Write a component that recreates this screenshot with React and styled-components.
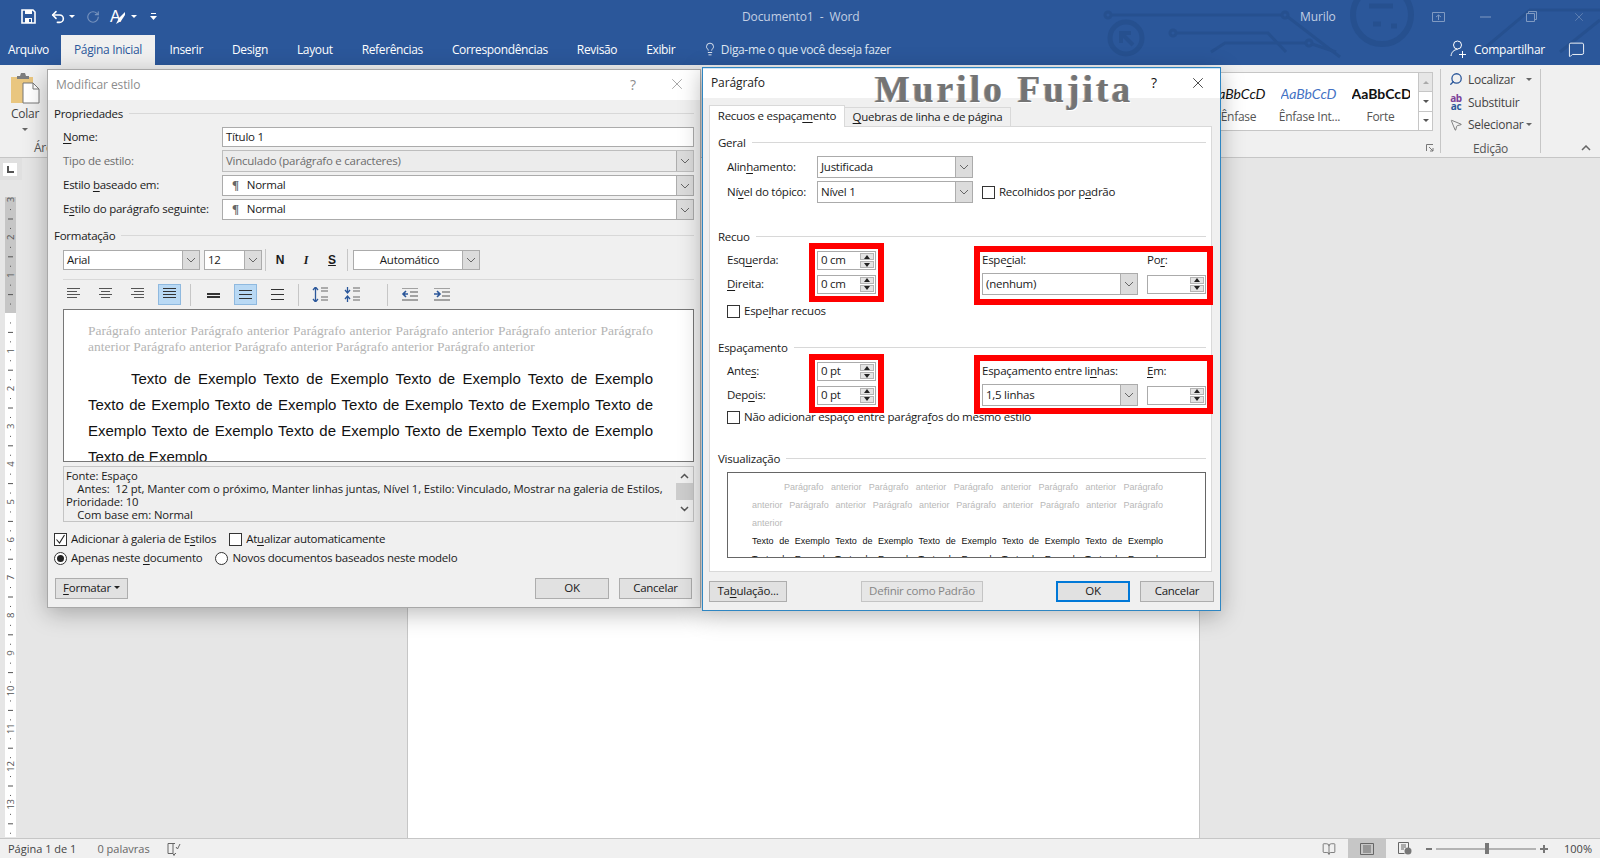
import React from "react";
import styled, { createGlobalStyle } from "styled-components";
import { Lightbulb, MessageSquare, Undo2, RotateCw, Search, MousePointer2, BookOpen, X } from "lucide-react";

const ui = `"Open Sans", "Noto Sans", "Liberation Sans", sans-serif`;

const GlobalStyle = createGlobalStyle`
  html, body { margin: 0; padding: 0; overflow: hidden; background: #e6e6e6; }
  * { box-sizing: border-box; }
  u { text-underline-offset: 2px; text-decoration-thickness: 1px; }
`;

const Screen = styled.div`
  position: relative;
  width: 1600px;
  height: 858px;
  display: flex;
  flex-direction: column;
  overflow: hidden;
  font-family: ${ui};
  font-size: 11.5px;
  color: #1a1a1a;
  letter-spacing: -0.25px;
`;

/* ---------- title bar and tabs ---------- */
const Header = styled.header`
  position: relative;
  height: 65px;
  flex: none;
  background: #2b579a;
  color: #fff;
`;
const Circuit = styled.svg`
  position: absolute;
  left: 0;
  top: 0;
  pointer-events: none;
`;
const TitleRow = styled.div`
  position: relative;
  height: 35px;
  display: flex;
  align-items: center;
  padding: 0 0 2px 21px;
`;
const Qat = styled.div`
  width: 721px;
  display: flex;
  align-items: center;
  flex: none;
`;
const QatSlot = styled.span`
  display: inline-flex;
  align-items: center;
  margin-right: ${({ $gap }) => $gap || 0}px;
  opacity: ${({ $dim }) => ($dim ? 0.35 : 1)};
`;
const QatLetter = styled.span`
  font-family: "Liberation Sans", sans-serif;
  font-size: 16px;
  line-height: 16px;
  margin-right: -5px;
`;
const MiniCaret = styled.span`
  width: 0;
  height: 0;
  border-left: 3px solid transparent;
  border-right: 3px solid transparent;
  border-top: 3px solid ${({ $color }) => $color || "#fff"};
`;
const DocTitle = styled.div`
  width: 558px;
  color: #c3cfe3;
  font-size: 12px;
  letter-spacing: -0.1px;
  white-space: pre;
`;
const UserName = styled.div`
  width: 132px;
  color: #c3cfe3;
  font-size: 12px;
  letter-spacing: -0.1px;
`;
const WinButtons = styled.div`
  display: flex;
  align-items: center;
  gap: 35px;
  opacity: 0.4;
`;
const TabRow = styled.nav`
  position: relative;
  height: 30px;
  display: flex;
  align-items: stretch;
`;
const RibbonTab = styled.div`
  display: flex;
  align-items: center;
  padding: 0 ${({ $pad }) => $pad || 14.5}px 2px;
  font-size: 12px;
  letter-spacing: -0.35px;
  color: ${({ $active }) => ($active ? "#2b579a" : "#fff")};
  background: ${({ $active }) => ($active ? "#f0f0f0" : "transparent")};
`;
const FileTab = styled(RibbonTab)`
  width: 61px;
  padding-left: 8px;
  padding-right: 0;
`;
const TellMe = styled.div`
  display: flex;
  align-items: center;
  gap: 4px;
  margin-left: 13px;
  padding-bottom: 2px;
  font-size: 12px;
  letter-spacing: -0.35px;
  color: #dfe6f1;
`;
const ShareArea = styled.div`
  margin-left: auto;
  display: flex;
  align-items: center;
  padding: 0 15px 2px 0;
  font-size: 12px;
`;
const ShareLabel = styled.span`
  margin: 0 23px 0 8px;
`;

/* ---------- ribbon ---------- */
const Ribbon = styled.section`
  height: 93px;
  flex: none;
  display: flex;
  background: #f0f0f0;
  border-bottom: 1px solid #c6c6c6;
  color: #444;
`;
const PasteGroup = styled.div`
  width: 50px;
  display: flex;
  flex-direction: column;
  align-items: center;
  padding-top: 8px;
  flex: none;
  svg { flex: none; }
`;
const PasteLabel = styled.div`
  margin-top: 2px;
  font-size: 12px;
  line-height: 16px;
`;
const PasteCaret = styled.div`
  margin-top: 6px;
  height: 3px;
  display: flex;
`;
const GroupName = styled.div`
  align-self: flex-start;
  margin: 9px 0 0 34px;
  font-size: 12px;
  line-height: 16px;
  white-space: nowrap;
  color: #555;
`;
const StylesGroup = styled.div`
  margin-left: auto;
  width: 300px;
  flex: none;
  display: flex;
  flex-direction: column;
  align-items: flex-end;
  padding: 7px 7px 0 0;
`;
const Gallery = styled.div`
  width: 293px;
  height: 59px;
  display: flex;
  justify-content: flex-end;
  background: #fff;
  border: 1px solid #c6c6c6;
`;
const StyleItem = styled.div`
  width: 71px;
  overflow: hidden;
  display: flex;
  flex-direction: column;
  align-items: center;
  padding-top: 11px;
`;
const StyleSample = styled.div`
  width: 58px;
  height: 20px;
  overflow: hidden;
  white-space: nowrap;
  font-family: "Lato", "Liberation Sans", sans-serif;
  font-size: 14px;
  letter-spacing: 0;
  line-height: 20px;
  font-style: ${({ $bold }) => ($bold ? "normal" : "italic")};
  font-weight: ${({ $bold }) => ($bold ? 700 : 400)};
  color: ${({ $color }) => $color || "#111"};
`;
const StyleLabel = styled.div`
  margin-top: 4px;
  font-size: 12px;
  color: #555;
  white-space: nowrap;
`;
const GalleryScroll = styled.div`
  width: 14px;
  margin-left: 2px;
  flex: none;
  display: flex;
  flex-direction: column;
  border-left: 1px solid #c6c6c6;
`;
const GalleryBtn = styled.div`
  flex: 1;
  display: flex;
  align-items: center;
  justify-content: center;
  background: ${({ $off }) => ($off ? "#e6e6e6" : "#fff")};
  & + & { border-top: 1px solid #c6c6c6; }
`;
const GalleryTri = styled.span`
  width: 0;
  height: 0;
  border-left: 3px solid transparent;
  border-right: 3px solid transparent;
  ${({ $up }) => ($up ? "border-bottom: 3px solid #aaa;" : "border-top: 3px solid #555;")}
`;
const Launcher = styled.svg`
  margin: 13px -1px 0 0;
`;
const GroupSep = styled.div`
  width: 1px;
  height: 84px;
  margin-top: 4px;
  background: #c6c6c6;
  flex: none;
`;
const EditGroup = styled.div`
  width: 99px;
  flex: none;
  display: flex;
  flex-direction: column;
  padding: 3px 0 0 8px;
`;
const EditRow = styled.div`
  height: 23px;
  display: flex;
  align-items: center;
  font-size: 12px;
  gap: 5px;
`;
const EditIcon = styled.span`
  width: 14px;
  display: inline-flex;
  justify-content: center;
`;
const FlippedSearch = styled(Search)`
  transform: scaleX(-1);
`;
const ReplaceIcon = styled.span`
  width: 14px;
  display: inline-flex;
  flex-direction: column;
  align-items: center;
  font-size: 10px;
  line-height: 8px;
  font-weight: 700;
  letter-spacing: -0.4px;
  color: #7b3f98;
`;
const ReplaceTo = styled.span`
  color: #2b579a;
`;
const EditCaret = styled.span`
  display: inline-flex;
  margin-left: ${({ $gap }) => $gap}px;
`;
const EditName = styled.div`
  margin-top: 4px;
  text-align: center;
  padding-right: 8px;
  font-size: 12px;
  color: #555;
`;
const CollapseArea = styled.div`
  width: 59px;
  flex: none;
  display: flex;
  align-items: flex-end;
  justify-content: flex-end;
  padding: 0 9px 6px 0;
`;

/* ---------- document area ---------- */
const Workspace = styled.main`
  flex: 1;
  display: flex;
  min-height: 0;
  background: #e6e6e6;
`;
const RulerColumn = styled.div`
  width: 407px;
  flex: none;
`;
const TabStop = styled.div`
  width: 22px;
  height: 22px;
  padding: 5px 5px 4px 3px;
  background: #e0e0e0;
`;
const TabStopBox = styled.div`
  width: 14px;
  height: 13px;
  background: #fff;
  display: flex;
  align-items: center;
  justify-content: center;
`;
const RulerSvg = styled.svg`
  display: block;
  margin: 17px 0 0 5px;
`;
const Page = styled.div`
  width: 793px;
  height: 100%;
  background: #fff;
  border-left: 1px solid #c6c6c6;
  border-right: 1px solid #c6c6c6;
`;
const StatusBar = styled.footer`
  height: 20px;
  flex: none;
  display: flex;
  align-items: stretch;
  background: #f0f0f0;
  border-top: 1px solid #c6c6c6;
  font-size: 11px;
  letter-spacing: 0;
  color: #444;
  padding-left: 8px;
`;
const StatusText = styled.div`
  display: flex;
  align-items: center;
  margin-right: ${({ $gap }) => $gap}px;
  color: ${({ $soft }) => ($soft ? "#666" : "#444")};
`;
const StatusIcon = styled.div`
  display: flex;
  align-items: center;
  justify-content: center;
  width: ${({ $w }) => $w || 38}px;
  background: ${({ $on }) => ($on ? "#c6c6c6" : "transparent")};
`;
const ZoomBox = styled.div`
  margin-left: auto;
  display: flex;
  align-items: stretch;
  padding-right: 8px;
`;
const ZoomLabel = styled.div`
  display: flex;
  align-items: center;
  margin-left: 12px;
`;

/* ---------- shared dialog parts ---------- */
const Dialog = styled.div`
  position: absolute;
  left: ${({ $left }) => $left}px;
  top: ${({ $top }) => $top}px;
  width: ${({ $width }) => $width}px;
  height: ${({ $height }) => $height}px;
  background: #f0f0f0;
  border: 1px solid ${({ $active }) => ($active ? "#2f86c2" : "#a8a8a8")};
  box-shadow: 0 5px 22px rgba(0, 0, 0, 0.28);
  display: flex;
  flex-direction: column;
`;
const DialogTitle = styled.div`
  height: 30px;
  flex: none;
  display: flex;
  align-items: center;
  padding: 0 0 2px ${({ $pad }) => $pad}px;
  background: #fff;
  font-size: 12px;
  letter-spacing: -0.1px;
  color: ${({ $dim }) => ($dim ? "#8c8c8c" : "#222")};
  border-top: ${({ $active }) => ($active ? "1px solid #cfe4f5" : "0")};
`;
const TitleGlyphs = styled.div`
  margin-left: auto;
  display: flex;
  align-items: center;
  gap: 32px;
  padding-right: ${({ $right }) => $right}px;
  color: ${({ $dim }) => ($dim ? "#8c8c8c" : "#111")};
  font-size: 14px;
`;
const DialogBody = styled.div`
  flex: 1;
  padding: 0 ${({ $right }) => $right}px 0 6px;
  display: flex;
  flex-direction: column;
`;
const Head = styled.div`
  height: 14px;
  flex: none;
  margin-top: ${({ $top }) => $top}px;
  padding-bottom: 2px;
  display: flex;
  align-items: center;
  gap: 6px;
  white-space: nowrap;
  &::after {
    content: "";
    flex: 1;
    height: 1px;
    background: #d8d8d8;
  }
`;
const Box = styled.div`
  display: flex;
  align-items: center;
  width: ${({ $w }) => ($w ? `${$w}px` : "auto")};
  flex: ${({ $w }) => ($w ? "none" : 1)};
  height: ${({ $h }) => $h || 22}px;
  padding-left: ${({ $pad }) => ($pad === undefined ? 3 : $pad)}px;
  background: ${({ $off }) => ($off ? "#ececec" : "#fff")};
  color: ${({ $off }) => ($off ? "#6d6d6d" : "#1a1a1a")};
  border: 1px solid ${({ $off }) => ($off ? "#bdbdbd" : "#ababab")};
  white-space: nowrap;
`;
const BoxText = styled.span`
  flex: 1;
  min-width: 0;
  padding-bottom: 2px;
  text-align: ${({ $center }) => ($center ? "center" : "left")};
`;
const Pilcrow = styled.span`
  margin: 0 8px 2px 9px;
  font-family: "Liberation Serif", serif;
  font-size: 13px;
  font-weight: 700;
  color: #666;
`;
const ArrowBtn = styled.div`
  width: 17px;
  align-self: stretch;
  flex: none;
  display: flex;
  align-items: center;
  justify-content: center;
  background: #dcdcdc;
  border-left: 1px solid #adadad;
`;
const SpinCol = styled.div`
  width: 16px;
  height: 100%;
  padding: 1px;
  flex: none;
  display: flex;
  flex-direction: column;
  gap: 1px;
`;
const SpinBtn = styled.div`
  flex: 1;
  display: flex;
  align-items: center;
  justify-content: center;
  background: #e4e4e4;
  border: 1px solid #b5b5b5;
`;
const SpinTri = styled.span`
  width: 0;
  height: 0;
  border-left: 3px solid transparent;
  border-right: 3px solid transparent;
  ${({ $up }) => ($up ? "border-bottom: 4px solid #222;" : "border-top: 4px solid #222;")}
`;
const CheckRow = styled.div`
  height: 14px;
  flex: none;
  display: flex;
  align-items: center;
  margin-top: ${({ $top }) => $top}px;
  margin-left: ${({ $left }) => $left || 0}px;
`;
const CheckItem = styled.label`
  display: flex;
  align-items: center;
  gap: 4px;
  white-space: nowrap;
  margin-right: ${({ $gap }) => $gap || 0}px;
`;
const CheckText = styled.span`
  padding-bottom: 2px;
`;
const CheckBoxMark = styled.span`
  width: 13px;
  height: 13px;
  flex: none;
  display: inline-flex;
  align-items: center;
  justify-content: center;
  background: #fff;
  border: 1px solid #333;
  border-radius: ${({ $round }) => ($round ? "50%" : "0")};
`;
const RadioDot = styled.span`
  width: 7px;
  height: 7px;
  border-radius: 50%;
  background: #222;
`;
const Btn = styled.div`
  height: 21px;
  width: ${({ $w }) => $w}px;
  flex: none;
  display: flex;
  align-items: center;
  justify-content: center;
  gap: 3px;
  padding-bottom: 2px;
  margin-left: ${({ $left }) => $left || 0}px;
  background: ${({ $off }) => ($off ? "#e6e6e6" : "#e1e1e1")};
  color: ${({ $off }) => ($off ? "#858585" : "#1a1a1a")};
  border: ${({ $main }) => ($main ? "2px solid #0078d7" : "1px solid #adadad")};
  ${({ $off }) => $off && "border-color: #c4c4c4;"}
`;

/* ---------- style dialog ---------- */
const FieldRow = styled.div`
  display: flex;
  align-items: center;
  margin-top: ${({ $top }) => $top}px;
  padding-left: 9px;
`;
const FieldLabel = styled.div`
  width: ${({ $w }) => $w || 159}px;
  flex: none;
  padding-bottom: 2px;
  white-space: nowrap;
  color: ${({ $off }) => ($off ? "#6d6d6d" : "inherit")};
`;
const FontBar = styled.div`
  height: 20px;
  flex: none;
  margin-top: 7px;
  padding-left: 9px;
  display: flex;
  align-items: center;
`;
const BarGap = styled.div`
  width: 4px;
  flex: none;
`;
const BarSep = styled.div`
  width: 1px;
  height: ${({ $h }) => $h || 22}px;
  flex: none;
  background: #c6c6c6;
  margin: 0 ${({ $right }) => $right || 0}px 0 ${({ $left }) => $left || 0}px;
`;
const FontGlyph = styled.div`
  width: 26px;
  flex: none;
  text-align: center;
  font-size: 12px;
  font-weight: 700;
  font-style: ${({ $italic }) => ($italic ? "italic" : "normal")};
  text-decoration: ${({ $under }) => ($under ? "underline" : "none")};
  font-family: ${({ $italic }) => ($italic ? `"Liberation Serif", serif` : `"Liberation Sans", sans-serif`)};
`;
const BarRule = styled.div`
  height: 1px;
  flex: none;
  margin: 9px 0 0 9px;
  background: #d8d8d8;
`;
const ParaBar = styled.div`
  height: 21px;
  flex: none;
  margin-top: 4px;
  padding-left: 8px;
  display: flex;
  align-items: center;
  gap: 9px;
`;
const ParaBtn = styled.div`
  width: 23px;
  height: 21px;
  flex: none;
  display: flex;
  align-items: center;
  justify-content: center;
  background: ${({ $on }) => ($on ? "#b9d9f4" : "transparent")};
  border: 1px solid ${({ $on }) => ($on ? "#8fb9df" : "transparent")};
`;
const SamplePane = styled.div`
  height: 153px;
  flex: none;
  margin: 4px 0 0 9px;
  padding: 13px 40px 0 24px;
  background: #fff;
  border: 1px solid #777;
  overflow: hidden;
`;
const PrevLine = styled.div`
  font-family: "Liberation Serif", serif;
  font-size: 13.5px;
  line-height: 16px;
  letter-spacing: 0;
  color: #b4b4b4;
  white-space: nowrap;
  text-align: ${({ $fill }) => ($fill ? "justify" : "left")};
  text-align-last: ${({ $fill }) => ($fill ? "justify" : "left")};
`;
const SampleText = styled.div`
  margin-top: 11px;
  color: #111;
  letter-spacing: 0;
`;
const SampleLine = styled.div`
  font-family: "Liberation Sans", sans-serif;
  font-size: 15px;
  line-height: 26px;
  white-space: nowrap;
  padding-left: ${({ $indent }) => ($indent ? 43 : 0)}px;
  text-align: ${({ $fill }) => ($fill ? "justify" : "left")};
  text-align-last: ${({ $fill }) => ($fill ? "justify" : "left")};
`;
const DescBox = styled.div`
  height: 56px;
  flex: none;
  margin: 4px 0 0 9px;
  display: flex;
  background: #efefef;
  border: 1px solid #c4c4c4;
`;
const DescText = styled.div`
  flex: 1;
  padding: 2px 0 0 2px;
  overflow: hidden;
  font-size: 11.3px;
  letter-spacing: -0.1px;
  line-height: 13px;
  white-space: pre;
`;
const ScrollTrack = styled.div`
  width: 17px;
  flex: none;
  display: flex;
  flex-direction: column;
  align-items: center;
  padding-top: 6px;
  background: #f0f0f0;
  svg { flex: none; }
`;
const ScrollThumb = styled.div`
  width: 17px;
  height: 17px;
  margin: 4px 0 6px;
  background: #cdcdcd;
`;
const BottomRow = styled.div`
  flex: none;
  display: flex;
  align-items: center;
  margin-top: 13px;
  padding: 0 2px 0 1px;
`;

/* ---------- paragraph dialog ---------- */
const TabStrip = styled.div`
  height: 21px;
  flex: none;
  margin-top: 7px;
  display: flex;
  align-items: flex-start;
`;
const SheetTab = styled.div`
  height: ${({ $active }) => ($active ? 22 : 20)}px;
  width: ${({ $w }) => $w}px;
  margin-top: ${({ $active }) => ($active ? 0 : 2)}px;
  flex: none;
  display: flex;
  align-items: center;
  justify-content: center;
  padding-bottom: 2px;
  position: relative;
  z-index: ${({ $active }) => ($active ? 1 : 0)};
  background: ${({ $active }) => ($active ? "#fff" : "#f0f0f0")};
  border: 1px solid #d9d9d9;
  border-bottom: 0;
  border-left: ${({ $active }) => ($active ? "1px solid #d9d9d9" : "0")};
  white-space: nowrap;
`;
const Panel = styled.div`
  position: relative;
  height: 446px;
  flex: none;
  padding: 0 5px 0 8px;
  background: #fff;
  border: 1px solid #d9d9d9;
  display: flex;
  flex-direction: column;
`;
const GeneralRow = styled.div`
  display: flex;
  align-items: center;
  margin-top: ${({ $top }) => $top}px;
  padding-left: 9px;
`;
const MetricGrid = styled.div`
  display: grid;
  grid-template-columns: 90px 165px 165px 59px;
  align-items: center;
  margin-top: ${({ $top }) => $top}px;
  padding-left: 9px;
  white-space: nowrap;
`;
const MetricLabel = styled.span`
  padding-bottom: 2px;
`;
const PaneBox = styled.div`
  height: 86px;
  flex: none;
  margin: 6px 0 0 9px;
  padding: 5px 42px 0 24px;
  border: 1px solid #666;
  overflow: hidden;
`;
const MiniLine = styled.div`
  font-family: "Liberation Sans", sans-serif;
  font-size: 9px;
  line-height: 18px;
  letter-spacing: 0;
  white-space: nowrap;
  color: ${({ $dark }) => ($dark ? "#111" : "#b8b8b8")};
  padding-left: ${({ $indent }) => ($indent ? 32 : 0)}px;
  text-align: ${({ $fill }) => ($fill ? "justify" : "left")};
  text-align-last: ${({ $fill }) => ($fill ? "justify" : "left")};
`;
const ButtonBar = styled.div`
  flex: none;
  display: flex;
  margin-top: 9px;
`;
const Highlight = styled.div`
  position: absolute;
  left: ${({ $left }) => $left}px;
  top: ${({ $top }) => $top}px;
  width: ${({ $w }) => $w}px;
  height: 59px;
  border: 6px solid #ff0000;
  pointer-events: none;
`;
const Watermark = styled.div`
  position: absolute;
  left: 172px;
  top: 0;
  font-family: "Liberation Serif", serif;
  font-size: 37px;
  font-weight: 700;
  line-height: 44px;
  letter-spacing: 3.2px;
  color: #747474;
  white-space: nowrap;
  text-shadow: 1px 1px 0 #fff, -1px 0 0 #999;
`;

const Chevron = ({ color = "#666" }) => (
  <svg width="10" height="6" viewBox="0 0 10 6">
    <path d="M1 1l4 4 4-4" fill="none" stroke={color} />
  </svg>
);

const Select = ({ w, h, off, center, para, children }) => (
  <Box $w={w} $h={h} $off={off} $pad={para ? 0 : 3}>
    {para && <Pilcrow>¶</Pilcrow>}
    <BoxText $center={center}>{children}</BoxText>
    <ArrowBtn><Chevron /></ArrowBtn>
  </Box>
);

const Spinner = ({ children }) => (
  <Box $w={59} $h={19}>
    <BoxText>{children}</BoxText>
    <SpinCol>
      <SpinBtn><SpinTri $up /></SpinBtn>
      <SpinBtn><SpinTri /></SpinBtn>
    </SpinCol>
  </Box>
);

const Check = ({ on, gap, children }) => (
  <CheckItem $gap={gap}>
    <CheckBoxMark>
      {on && (
        <svg width="11" height="11" viewBox="0 0 11 11">
          <path d="M1.5 5.5l3 3.5 5-8" fill="none" stroke="#222" strokeWidth="1.1" />
        </svg>
      )}
    </CheckBoxMark>
    <CheckText>{children}</CheckText>
  </CheckItem>
);

const Radio = ({ on, gap, children }) => (
  <CheckItem $gap={gap}>
    <CheckBoxMark $round>{on && <RadioDot />}</CheckBoxMark>
    <CheckText>{children}</CheckText>
  </CheckItem>
);

// horizontal text-alignment glyphs, each row is [from, to]
const LinesIcon = ({ rows, step = 3, color = "#555" }) => (
  <svg width="15" height="13" viewBox="0 0 15 13">
    {rows.map(([a, b], i) => (
      <rect key={i} x={a} y={i * step} width={b - a} height="1" fill={color} />
    ))}
  </svg>
);

const SpacingIcon = ({ ys, thick }) => (
  <svg width="15" height="13" viewBox="0 0 15 13">
    {ys.map((y) => (
      <rect key={y} x="1" y={y} width="13" height={thick ? 2 : 1} fill="#333" />
    ))}
  </svg>
);

const ParaSpaceIcon = ({ flip }) => (
  <svg width="16" height="15" viewBox="0 0 16 15">
    <path
      d={flip ? "M3.5 0v5M1 3l2.5 3L6 3M3.5 15v-5M1 12l2.5-3L6 12" : "M3.5 0v15M1 3l2.5-3L6 3M1 12l2.5 3L6 12"}
      fill="none"
      stroke="#2b579a"
      strokeWidth="1.3"
    />
    <path d="M9 1h7M9 4h7M9 10h7M9 13h7" stroke="#666" />
  </svg>
);

const IndentIcon = ({ flip }) => (
  <svg width="17" height="13" viewBox="0 0 17 13">
    <path d="M1 0h16M9 4h8M9 8h8M1 12h16" stroke="#555" />
    <path d={flip ? "M1 6h5M4 3l3 3-3 3" : "M7 6H2M5 3L2 6l3 3"} fill="none" stroke="#2b579a" strokeWidth="1.6" />
  </svg>
);

const Ruler = () => {
  const zero = 116;
  const cm = 37.8;
  const marks = [];
  for (let n = -3; n <= 14; n++) {
    const y = zero + n * cm;
    if (n !== 0) {
      marks.push(
        <text key={`n${n}`} x="0" y="0" fontSize="9.5" fontFamily="Open Sans" textAnchor="middle" fill="#555"
          transform={`translate(9 ${y}) rotate(-90)`}>
          {Math.abs(n)}
        </text>
      );
    }
    [0.25, 0.5, 0.75].forEach((f) => {
      const w = f === 0.5 ? 5 : 1;
      marks.push(<rect key={`${n}-${f}`} x={(11 - w) / 2} y={y + f * cm} width={w} height="1" fill="#555" />);
    });
  }
  return (
    <RulerSvg width="11" height="640" viewBox="0 0 11 640">
      <rect width="11" height="116" fill="#c6c6c6" />
      <rect y="116" width="11" height="524" fill="#fff" />
      {marks}
    </RulerSvg>
  );
};

const tabs = ["Inserir", "Design", "Layout", "Referências", "Correspondências", "Revisão", "Exibir"];
const para5 = "Parágrafo anterior Parágrafo anterior Parágrafo anterior Parágrafo anterior Parágrafo anterior Parágrafo";

const App = () => (
  <Screen>
    <GlobalStyle />
    <Header>
      <Circuit width="1600" height="65" viewBox="0 0 1600 65" fill="none" stroke="#26508f" strokeWidth="3">
        <circle cx="1108" cy="15" r="3" />
        <path d="M1111 15h171" />
        <circle cx="1285" cy="15" r="3" />
        <path d="M1288 17l52 40" />
        <circle cx="1126" cy="38" r="16" strokeWidth="5" />
        <path d="M1133 45l-12-12M1121 43V33h10" strokeWidth="4" />
        <circle cx="1173" cy="33" r="3" />
        <path d="M1176 33h92l18 19" />
        <path d="M1211 52l14-9h81" />
        <circle cx="1309" cy="43" r="3" />
        <path d="M1312 44l24 8" />
        <circle cx="1382" cy="15" r="29" strokeWidth="6" />
        <path d="M1369 6h24M1373 24h8M1391 26h6" strokeWidth="5" />
        <path d="M1480 52l50-42h70M1560 52l40-32" />
      </Circuit>
      <TitleRow>
        <Qat>
          <QatSlot $gap={14}>
            <svg width="15" height="15" viewBox="0 0 15 15">
              <path d="M1 1h11l2 2v11H1z" fill="none" stroke="#fff" strokeWidth="1.6" />
              <path d="M4 1h7v4H4zM4 9h7v5H4z" fill="#fff" />
              <path d="M8 10h2v3H8z" fill="#2b579a" />
            </svg>
          </QatSlot>
          <QatSlot $gap={3}><Undo2 size={16} color="#fff" strokeWidth={2.4} /></QatSlot>
          <QatSlot $gap={11}><MiniCaret /></QatSlot>
          <QatSlot $gap={10} $dim><RotateCw size={14} color="#fff" strokeWidth={2} /></QatSlot>
          <QatSlot $gap={5}>
            <QatLetter>A</QatLetter>
            <svg width="11" height="16" viewBox="0 0 11 16">
              <path d="M10 3L4 9l-3 6 5-3 4-6z" fill="#fff" />
            </svg>
          </QatSlot>
          <QatSlot $gap={13}><MiniCaret /></QatSlot>
          <QatSlot>
            <svg width="7" height="7" viewBox="0 0 7 7">
              <path d="M1 0h5v1H1z" fill="#fff" />
              <path d="M0 3h7L3.500 7z" fill="#fff" />
            </svg>
          </QatSlot>
        </Qat>
        <DocTitle>Documento1  -  Word</DocTitle>
        <UserName>Murilo</UserName>
        <WinButtons>
          <svg width="13" height="10" viewBox="0 0 13 10" fill="none" stroke="#fff">
            <path d="M.5.5h12v9H.5zM4 5l2.500-2L9 5M6.500 3v5" />
          </svg>
          <svg width="11" height="2" viewBox="0 0 11 2"><path d="M0 1h11" stroke="#fff" /></svg>
          <svg width="11" height="11" viewBox="0 0 11 11" fill="none" stroke="#fff">
            <path d="M.5 2.500h8v8h-8zM2.500 2.500v-2h8v8h-2" />
          </svg>
          <X size={14} color="#fff" strokeWidth={1} />
        </WinButtons>
      </TitleRow>
      <TabRow>
        <FileTab>Arquivo</FileTab>
        <RibbonTab $active $pad={13}>Página Inicial</RibbonTab>
        {tabs.map((t) => <RibbonTab key={t}>{t}</RibbonTab>)}
        <TellMe>
          <Lightbulb size={14} color="#fff" strokeWidth={1.4} />
          Diga-me o que você deseja fazer
        </TellMe>
        <ShareArea>
          <svg width="16" height="18" viewBox="0 0 16 18" fill="none" stroke="#fff">
            <circle cx="7.500" cy="5" r="4" />
            <path d="M1 16c.5-4 3-6.500 6.500-6.500M9 14.500h7M12.500 11v7" />
          </svg>
          <ShareLabel>Compartilhar</ShareLabel>
          <MessageSquare size={17} color="#fff" strokeWidth={1.3} />
        </ShareArea>
      </TabRow>
    </Header>

    <Ribbon>
      <PasteGroup>
        <svg width="30" height="31" viewBox="0 0 30 31">
          <rect x="1" y="4" width="22" height="26" fill="#e9c67f" />
          <path d="M7 5V3h3l1-3h4l1 3h3v3H7z" fill="#7d7d7d" />
          <path d="M13 10h10l6 6v14H13z" fill="#fff" stroke="#777" />
          <path d="M23 10v6h6" fill="none" stroke="#777" />
        </svg>
        <PasteLabel>Colar</PasteLabel>
        <PasteCaret><MiniCaret $color="#666" /></PasteCaret>
        <GroupName>Área de Transferência</GroupName>
      </PasteGroup>
      <StylesGroup>
        <Gallery>
          <StyleItem>
            <StyleSample>AaBbCcD</StyleSample>
            <StyleLabel>Ênfase</StyleLabel>
          </StyleItem>
          <StyleItem>
            <StyleSample $color="#4472c4">AaBbCcD</StyleSample>
            <StyleLabel>Ênfase Int...</StyleLabel>
          </StyleItem>
          <StyleItem>
            <StyleSample $bold>AaBbCcD</StyleSample>
            <StyleLabel>Forte</StyleLabel>
          </StyleItem>
          <GalleryScroll>
            <GalleryBtn $off><GalleryTri $up /></GalleryBtn>
            <GalleryBtn><GalleryTri /></GalleryBtn>
            <GalleryBtn><GalleryTri /></GalleryBtn>
          </GalleryScroll>
        </Gallery>
        <Launcher width="8" height="8" viewBox="0 0 8 8" fill="none" stroke="#777">
          <path d="M.5 7V.5H7M3 3l4 4M7 4v3H4" />
        </Launcher>
      </StylesGroup>
      <GroupSep />
      <EditGroup>
        <EditRow>
          <EditIcon><FlippedSearch size={14} color="#2b579a" strokeWidth={2.2} /></EditIcon>
          Localizar
          <EditCaret $gap={6}><MiniCaret $color="#666" /></EditCaret>
        </EditRow>
        <EditRow>
          <ReplaceIcon><span>ab</span><ReplaceTo>ac</ReplaceTo></ReplaceIcon>
          Substituir
        </EditRow>
        <EditRow>
          <EditIcon><MousePointer2 size={14} color="#555" strokeWidth={1.2} /></EditIcon>
          Selecionar
          <EditCaret $gap={-3}><MiniCaret $color="#666" /></EditCaret>
        </EditRow>
        <EditName>Edição</EditName>
      </EditGroup>
      <GroupSep />
      <CollapseArea>
        <svg width="10" height="6" viewBox="0 0 10 6">
          <path d="M1 5l4-4 4 4" fill="none" stroke="#666" strokeWidth="1.5" />
        </svg>
      </CollapseArea>
    </Ribbon>

    <Workspace>
      <RulerColumn>
        <TabStop>
          <TabStopBox>
            <svg width="7" height="7" viewBox="0 0 7 7"><path d="M0 0h2v5h5v2H0z" fill="#555" /></svg>
          </TabStopBox>
        </TabStop>
        <Ruler />
      </RulerColumn>
      <Page />
    </Workspace>

    <StatusBar>
      <StatusText $gap={21}>Página 1 de 1</StatusText>
      <StatusText $gap={17} $soft>0 palavras</StatusText>
      <StatusIcon $w={14}>
        <svg width="14" height="14" viewBox="0 0 14 14" fill="none" stroke="#666">
          <path d="M1 1.500h5v10H1zM6 11.500l1 2 1-2h1M6 1.500h2M9 5l1.500 2L13 2" />
        </svg>
      </StatusIcon>
      <ZoomBox>
        <StatusIcon $w={38}><BookOpen size={14} color="#666" strokeWidth={1.4} /></StatusIcon>
        <StatusIcon $on $w={38}>
          <svg width="14" height="12" viewBox="0 0 14 12" fill="none" stroke="#666">
            <path d="M.5.500h13v11H.5zM3 3h8M3 5h8M3 7h8M3 9h8" />
          </svg>
        </StatusIcon>
        <StatusIcon $w={38}>
          <svg width="14" height="13" viewBox="0 0 14 13" fill="none" stroke="#666">
            <path d="M.5.500h10v6M.5.500v11h6M3 3h5M3 5h5M3 7h3" />
            <circle cx="10" cy="9" r="3.500" fill="#777" stroke="none" />
          </svg>
        </StatusIcon>
        <StatusIcon $w={128}>
          <svg width="124" height="13" viewBox="0 0 124 13">
            <path d="M0 6h6v2H0zM10 6.500h100v1H10zM59 1h4v11h-4zM114 6h8v2h-8zM117 3h2v8h-2z" fill="#777" />
          </svg>
        </StatusIcon>
        <ZoomLabel>100%</ZoomLabel>
      </ZoomBox>
    </StatusBar>

    <Dialog $left={47} $top={69} $width={654} $height={539}>
      <DialogTitle $dim $pad={8}>
        Modificar estilo
        <TitleGlyphs $dim $right={14}>
          <span>?</span>
          <X size={18} strokeWidth={1} />
        </TitleGlyphs>
      </DialogTitle>
      <DialogBody $right={6}>
        <Head $top={7}>Propriedades</Head>
        <FieldRow $top={6}>
          <FieldLabel><u>N</u>ome:</FieldLabel>
          <Box $h={20}><BoxText>Título 1</BoxText></Box>
        </FieldRow>
        <FieldRow $top={3}>
          <FieldLabel $off>Tipo de estilo:</FieldLabel>
          <Select off>Vinculado (parágrafo e caracteres)</Select>
        </FieldRow>
        <FieldRow $top={3}>
          <FieldLabel>Estilo <u>b</u>aseado em:</FieldLabel>
          <Select h={21} para>Normal</Select>
        </FieldRow>
        <FieldRow $top={3}>
          <FieldLabel>E<u>s</u>tilo do parágrafo seguinte:</FieldLabel>
          <Select h={21} para>Normal</Select>
        </FieldRow>
        <Head $top={9}>Formatação</Head>
        <FontBar>
          <Select w={137} h={20}>Arial</Select>
          <BarGap />
          <Select w={58} h={20}>12</Select>
          <BarSep $left={3} $right={1} />
          <FontGlyph>N</FontGlyph>
          <FontGlyph $italic>I</FontGlyph>
          <FontGlyph $under>S</FontGlyph>
          <BarSep $left={2} $right={5} />
          <Select w={127} h={20} center>Automático</Select>
        </FontBar>
        <BarRule />
        <ParaBar>
          <ParaBtn><LinesIcon rows={[[1, 14], [1, 11], [1, 14], [1, 11]]} /></ParaBtn>
          <ParaBtn><LinesIcon rows={[[1, 14], [3, 12], [1, 14], [3, 12]]} /></ParaBtn>
          <ParaBtn><LinesIcon rows={[[1, 14], [4, 14], [1, 14], [4, 14]]} /></ParaBtn>
          <ParaBtn $on><LinesIcon color="#333" rows={[[1, 14], [1, 14], [1, 14], [1, 14]]} /></ParaBtn>
          <BarSep $right={2} />
          <ParaBtn><SpacingIcon ys={[5, 8]} thick /></ParaBtn>
          <ParaBtn $on><SpacingIcon ys={[2, 6, 10]} /></ParaBtn>
          <ParaBtn><SpacingIcon ys={[1, 6, 11]} /></ParaBtn>
          <BarSep />
          <ParaBtn><ParaSpaceIcon /></ParaBtn>
          <ParaBtn><ParaSpaceIcon flip /></ParaBtn>
          <BarSep $left={15} $right={1} />
          <ParaBtn><IndentIcon /></ParaBtn>
          <ParaBtn><IndentIcon flip /></ParaBtn>
        </ParaBar>
        <SamplePane>
          <PrevLine $fill>{para5}</PrevLine>
          <PrevLine>anterior Parágrafo anterior Parágrafo anterior Parágrafo anterior Parágrafo anterior</PrevLine>
          <SampleText>
            <SampleLine $fill $indent>Texto de Exemplo Texto de Exemplo Texto de Exemplo Texto de Exemplo</SampleLine>
            <SampleLine $fill>Texto de Exemplo Texto de Exemplo Texto de Exemplo Texto de Exemplo Texto de</SampleLine>
            <SampleLine $fill>Exemplo Texto de Exemplo Texto de Exemplo Texto de Exemplo Texto de Exemplo</SampleLine>
            <SampleLine>Texto de Exemplo</SampleLine>
          </SampleText>
        </SamplePane>
        <DescBox>
          <DescText>
            {"Fonte: Espaço\n    Antes:  12 pt, Manter com o próximo, Manter linhas juntas, Nível 1, Estilo: Vinculado, Mostrar na galeria de Estilos,\nPrioridade: 10\n    Com base em: Normal"}
          </DescText>
          <ScrollTrack>
            <svg width="9" height="6" viewBox="0 0 9 6"><path d="M1 5l3.500-3.500L8 5" fill="none" stroke="#555" strokeWidth="1.5" /></svg>
            <ScrollThumb />
            <svg width="9" height="6" viewBox="0 0 9 6"><path d="M1 1l3.500 3.500L8 1" fill="none" stroke="#555" strokeWidth="1.5" /></svg>
          </ScrollTrack>
        </DescBox>
        <CheckRow $top={10}>
          <Check on gap={13}>Adicionar à galeria de E<u>s</u>tilos</Check>
          <Check>At<u>u</u>alizar automaticamente</Check>
        </CheckRow>
        <CheckRow $top={5}>
          <Radio on gap={13}>Apenas neste <u>d</u>ocumento</Radio>
          <Radio>Novos documentos baseados neste modelo</Radio>
        </CheckRow>
        <BottomRow>
          <Btn $w={73}><span><u>F</u>ormatar</span><MiniCaret $color="#222" /></Btn>
          <Btn $w={74} $left={407}>OK</Btn>
          <Btn $w={73} $left={10}>Cancelar</Btn>
        </BottomRow>
      </DialogBody>
    </Dialog>

    <Dialog $active $left={702} $top={67} $width={519} $height={544}>
      <DialogTitle $active $pad={8}>
        Parágrafo
        <TitleGlyphs $right={13}>
          <span>?</span>
          <X size={18} strokeWidth={1} />
        </TitleGlyphs>
      </DialogTitle>
      <Watermark>Murilo Fujita</Watermark>
      <DialogBody $right={8}>
        <TabStrip>
          <SheetTab $active $w={136}><span>Recuos e espaça<u>m</u>ento</span></SheetTab>
          <SheetTab $w={166}><span><u>Q</u>uebras de linha e de página</span></SheetTab>
        </TabStrip>
        <Panel>
          <Head $top={9}>Geral</Head>
          <GeneralRow $top={6}>
            <FieldLabel $w={90}>Alin<u>h</u>amento:</FieldLabel>
            <Select w={156}>Justificada</Select>
          </GeneralRow>
          <GeneralRow $top={3}>
            <FieldLabel $w={90}>Ní<u>v</u>el do tópico:</FieldLabel>
            <Select w={156}>Nível 1</Select>
            <CheckRow $left={9} $top={0}>
              <Check>Recolhidos por p<u>a</u>drão</Check>
            </CheckRow>
          </GeneralRow>

          <Head $top={27}>Recuo</Head>
          <MetricGrid $top={7}>
            <MetricLabel>Esq<u>u</u>erda:</MetricLabel>
            <Spinner>0 cm</Spinner>
            <MetricLabel>Espe<u>c</u>ial:</MetricLabel>
            <MetricLabel>Po<u>r</u>:</MetricLabel>
          </MetricGrid>
          <MetricGrid $top={3}>
            <MetricLabel><u>D</u>ireita:</MetricLabel>
            <Spinner>0 cm</Spinner>
            <Select w={156}>(nenhum)</Select>
            <Spinner />
          </MetricGrid>
          <CheckRow $top={9} $left={9}>
            <Check>Espe<u>l</u>har recuos</Check>
          </CheckRow>

          <Head $top={23}>Espaçamento</Head>
          <MetricGrid $top={7}>
            <MetricLabel>Ante<u>s</u>:</MetricLabel>
            <Spinner>0 pt</Spinner>
            <MetricLabel>Espaçamento entre li<u>n</u>has:</MetricLabel>
            <MetricLabel><u>E</u>m:</MetricLabel>
          </MetricGrid>
          <MetricGrid $top={3}>
            <MetricLabel>Dep<u>o</u>is:</MetricLabel>
            <Spinner>0 pt</Spinner>
            <Select w={156}>1,5 linhas</Select>
            <Spinner />
          </MetricGrid>
          <CheckRow $top={4} $left={9}>
            <Check>Não adicionar espaço entre parágra<u>f</u>os do mesmo estilo</Check>
          </CheckRow>

          <Head $top={28}>Visualização</Head>
          <PaneBox>
            <MiniLine $fill $indent>Parágrafo anterior Parágrafo anterior Parágrafo anterior Parágrafo anterior Parágrafo</MiniLine>
            <MiniLine $fill>anterior Parágrafo anterior Parágrafo anterior Parágrafo anterior Parágrafo anterior Parágrafo</MiniLine>
            <MiniLine>anterior</MiniLine>
            <MiniLine $fill $dark>Texto de Exemplo Texto de Exemplo Texto de Exemplo Texto de Exemplo Texto de Exemplo</MiniLine>
            <MiniLine $fill $dark>Texto de Exemplo Texto de Exemplo Texto de Exemplo Texto de Exemplo Texto de Exemplo</MiniLine>
          </PaneBox>
          <Highlight $left={99} $top={116} $w={75} />
          <Highlight $left={264} $top={119} $w={239} />
          <Highlight $left={99} $top={227} $w={75} />
          <Highlight $left={264} $top={228} $w={239} />
        </Panel>
        <ButtonBar>
          <Btn $w={78}><span>Ta<u>b</u>ulação...</span></Btn>
          <Btn $w={122} $left={74} $off>Definir como Padrão</Btn>
          <Btn $w={74} $left={73} $main>OK</Btn>
          <Btn $w={74} $left={10}>Cancelar</Btn>
        </ButtonBar>
      </DialogBody>
    </Dialog>
  </Screen>
);

export default App;
